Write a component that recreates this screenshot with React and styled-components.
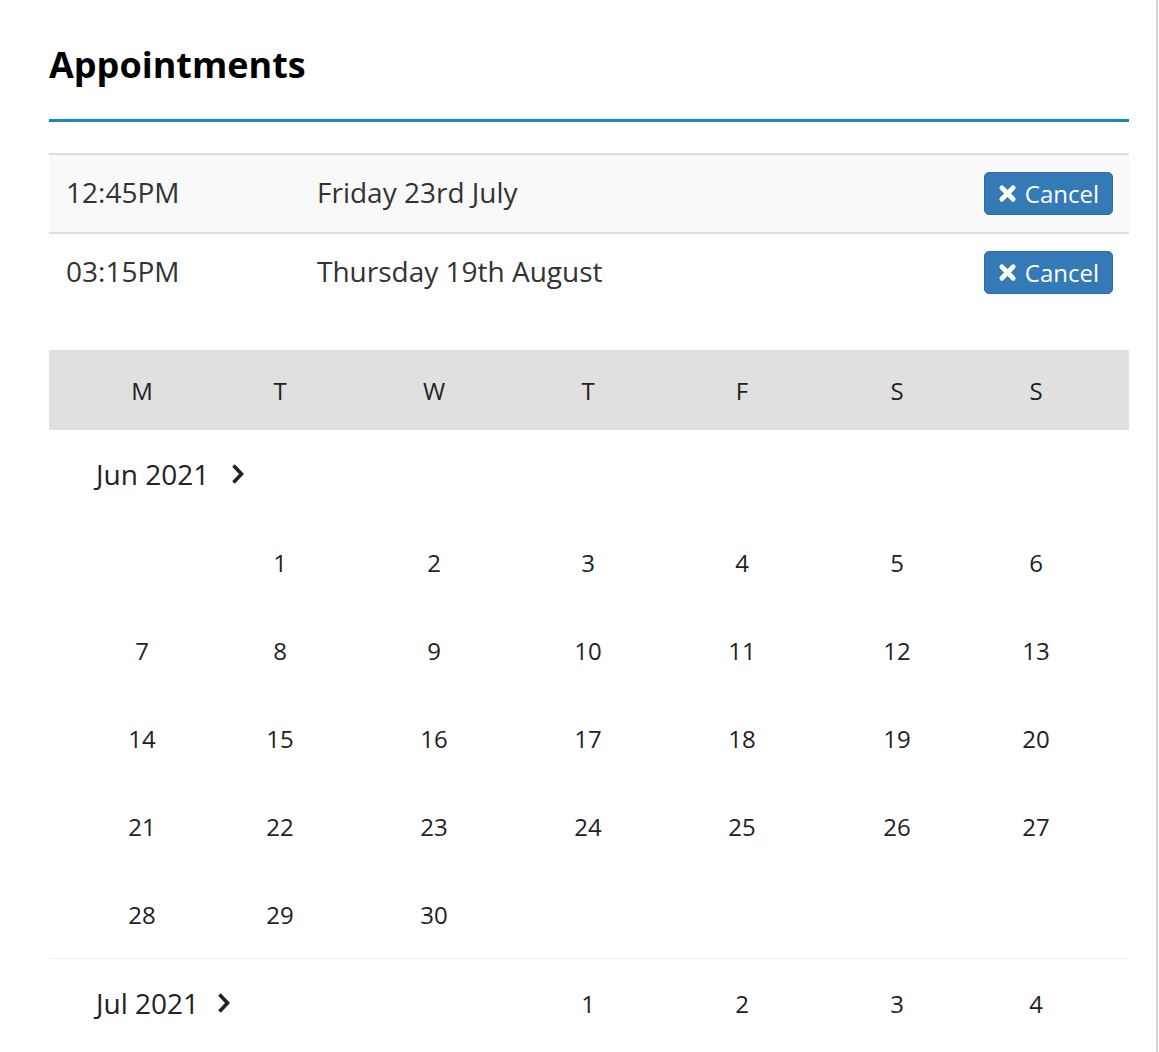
import React from "react"
import styled, { createGlobalStyle } from "styled-components"

const GlobalStyle = createGlobalStyle`
  body {
    margin: 0;
    background: #fff;
    font-family: "Open Sans", "Noto Sans", sans-serif;
    color: #333;
  }
`

const appointments = [
  { time: "12:45PM", date: "Friday 23rd July" },
  { time: "03:15PM", date: "Thursday 19th August" },
]

const weekDays = ["M", "T", "W", "T", "F", "S", "S"]

// offset = weekday index (0 = Monday) of the 1st
const months = [
  { label: "Jun 2021", offset: 1, days: 30 },
  { label: "Jul 2021", offset: 3, days: 4 },
]

const buildWeeks = (offset, days) => {
  const cells = []
  for (let i = 0; i < offset; i++) cells.push(null)
  for (let d = 1; d <= days; d++) cells.push(d)
  while (cells.length % 7) cells.push(null)
  const weeks = []
  for (let i = 0; i < cells.length; i += 7) weeks.push(cells.slice(i, i + 7))
  return weeks
}

const CrossIcon = () => (
  <svg width="19" height="19" viewBox="0 0 20 20">
    <path
      d="M4 4 L16 16 M16 4 L4 16"
      stroke="#fff"
      strokeWidth="5"
      strokeLinecap="round"
      fill="none"
    />
  </svg>
)

const Chevron = () => (
  <svg width="13" height="22" viewBox="0 0 13 22">
    <polyline
      points="2.5,2.5 10.5,11 2.5,19.5"
      stroke="#222"
      strokeWidth="3.6"
      fill="none"
    />
  </svg>
)

const MonthBlock = ({ label, offset, days, last }) => {
  const weeks = buildWeeks(offset, days)
  const inlineLabel = offset >= 3
  return (
    <MonthSection last={last}>
      {!inlineLabel && (
        <DayRow>
          <MonthLabel span={7}>
            {label}
            <Chevron />
          </MonthLabel>
        </DayRow>
      )}
      {weeks.map((week, wi) => (
        <DayRow key={wi}>
          {inlineLabel && wi === 0 && (
            <MonthLabel span={offset} tight>
              {label}
              <Chevron />
            </MonthLabel>
          )}
          {week.map((day, di) =>
            inlineLabel && wi === 0 && di < offset ? null : (
              <DayCell key={di}>{day}</DayCell>
            )
          )}
        </DayRow>
      ))}
    </MonthSection>
  )
}

const App = () => (
  <>
    <GlobalStyle />
    <Page>
      <Title>Appointments</Title>
      <AppointmentList>
        {appointments.map(({ time, date }, index) => (
          <AppointmentRow key={index} striped={index % 2 === 0}>
            <Time>{time}</Time>
            <DateText>{date}</DateText>
            <CancelButton>
              <CrossIcon />
              Cancel
            </CancelButton>
          </AppointmentRow>
        ))}
      </AppointmentList>
      <Calendar>
        <WeekHeader>
          {weekDays.map((d, i) => (
            <HeaderCell key={i}>{d}</HeaderCell>
          ))}
        </WeekHeader>
        {months.map((m, i) => (
          <MonthBlock key={m.label} {...m} last={i === months.length - 1} />
        ))}
      </Calendar>
    </Page>
  </>
)

export default App

const columns = "186px 90px 218px 90px 218px 92px 186px"

const Page = styled.div`
  width: 1158px;
  min-height: 1052px;
  box-sizing: border-box;
  border-right: 2px solid #d6d6d6;
  padding: 0 27px 0 49px;
`

const Title = styled.h1`
  margin: 0;
  padding: 44px 0 33px;
  font-size: 36px;
  font-weight: 700;
  line-height: 42px;
  color: #000;
  border-bottom: 3px solid #1a88b6;
`

const AppointmentList = styled.div`
  margin-top: 31px;
  border-top: 2px solid #dedede;
`

const AppointmentRow = styled.div`
  display: flex;
  align-items: center;
  height: 77px;
  padding: 0 16px 0 17px;
  background: ${props => (props.striped ? "#f9f9f9" : "#fff")};
  border-bottom: ${props => (props.striped ? "2px solid #dedede" : "none")};
  font-size: 28px;
  line-height: 38px;
`

const Time = styled.div`
  width: 251px;
  margin-top: -3px;
`

const DateText = styled.div`
  flex: 1;
  margin-top: -3px;
`

const CancelButton = styled.button`
  display: flex;
  align-items: center;
  gap: 8px;
  height: 43px;
  padding: 0 13px;
  background: #337ab7;
  border: 1px solid #2e6da4;
  border-radius: 5px;
  color: #fff;
  font-family: "Open Sans", "Noto Sans", sans-serif;
  font-size: 24px;
  cursor: pointer;
`

const Calendar = styled.div`
  margin-top: 39px;
`

const WeekHeader = styled.div`
  display: grid;
  grid-template-columns: ${columns};
  height: 80px;
  align-items: center;
  background: #e0e0e0;
`

const HeaderCell = styled.div`
  text-align: center;
  font-size: 24px;
  color: #222;
`

const MonthSection = styled.div`
  border-bottom: ${props => (props.last ? "none" : "1px solid #eee")};
`

const DayRow = styled.div`
  display: grid;
  grid-template-columns: ${columns};
  height: 88px;
  align-items: center;
`

const DayCell = styled.div`
  text-align: center;
  font-size: 24px;
  color: #222;
`

const MonthLabel = styled.div`
  grid-column: span ${props => props.span};
  display: flex;
  align-items: center;
  gap: ${props => (props.tight ? "18px" : "22px")};
  padding-left: 47px;
  font-size: 28px;
  color: #222;
`
